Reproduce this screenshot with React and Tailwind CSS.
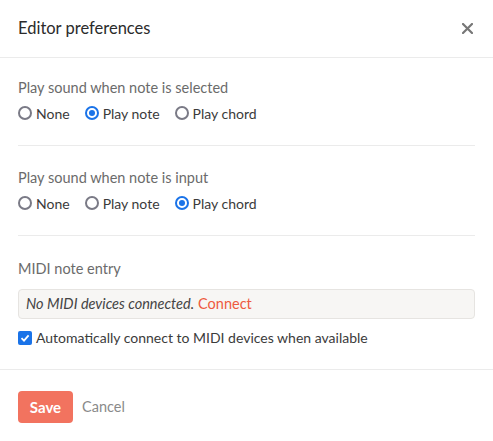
import { useState } from 'react';

const OPTIONS = ['None', 'Play note', 'Play chord'];

function Radio({ checked, label, onClick }) {
  return (
    <button type="button" onClick={onClick} className="flex items-center gap-[4px] text-[14px] text-[#3b3b3b]">
      <span
        className={`flex h-[14px] w-[14px] items-center justify-center rounded-full border-2 ${
          checked ? 'border-[#1a73e8]' : 'border-[#7a7a86]'
        }`}
      >
        {checked && <span className="h-[6px] w-[6px] rounded-full bg-[#1a73e8]" />}
      </span>
      {label}
    </button>
  );
}

function RadioGroup({ title, value, onChange }) {
  return (
    <div className="border-b border-[#ebebeb] pb-[21px]">
      <div className="text-[14.5px] text-[#6b6b6b]">{title}</div>
      <div className="mt-[4px] flex gap-[15px]">
        {OPTIONS.map((opt) => (
          <Radio key={opt} label={opt} checked={value === opt} onClick={() => onChange(opt)} />
        ))}
      </div>
    </div>
  );
}

export default function App() {
  const [onSelect, setOnSelect] = useState('Play note');
  const [onInput, setOnInput] = useState('Play chord');
  const [autoConnect, setAutoConnect] = useState(true);

  return (
    <div className="h-[441px] w-[493px] bg-white font-['Lato',sans-serif] antialiased">
      <div className="flex h-[58px] items-center justify-between border-b border-[#ebebeb] px-[18px]">
        <h2 className="text-[16.5px] text-[#2b2b2b]">Editor preferences</h2>
        <button type="button" className="mr-[2px] text-[#777]">
          <svg width="11" height="11" viewBox="0 0 11 11">
            <path d="M1 1L10 10M10 1L1 10" stroke="currentColor" strokeWidth="2.2" strokeLinecap="round" />
          </svg>
        </button>
      </div>

      <div className="flex flex-col gap-[21px] px-[18px] pt-[19px]">
        <RadioGroup title="Play sound when note is selected" value={onSelect} onChange={setOnSelect} />
        <RadioGroup title="Play sound when note is input" value={onInput} onChange={setOnInput} />

        <div className="mt-[1px] pb-[21px]">
          <div className="text-[14.5px] text-[#6b6b6b]">MIDI note entry</div>
          <div className="mt-[10px] flex h-[30px] items-center rounded-[4px] border border-[#e6e4e1] bg-[#f7f6f4] px-[7px] text-[14.5px]">
            <span className="italic text-[#444]">No MIDI devices connected.</span>
            <a className="ml-[4px] cursor-pointer text-[#ee5a40]">Connect</a>
          </div>
          <label className="mt-[8px] flex items-center gap-[4px] text-[14px] text-[#3b3b3b]">
            <button
              type="button"
              onClick={() => setAutoConnect(!autoConnect)}
              className={`flex h-[14px] w-[14px] items-center justify-center rounded-[2px] ${
                autoConnect ? 'bg-[#1a73e8]' : 'border-2 border-[#7a7a86]'
              }`}
            >
              {autoConnect && (
                <svg width="10" height="10" viewBox="0 0 10 10">
                  <path d="M1.5 5.2L4 7.6L8.6 2.4" fill="none" stroke="white" strokeWidth="1.8" />
                </svg>
              )}
            </button>
            Automatically connect to MIDI devices when available
          </label>
        </div>
      </div>

      <div className="flex items-center gap-[9px] border-t border-[#ebebeb] px-[18px] pt-[21px]">
        <button type="button" className="h-[32px] w-[55px] rounded-[4px] bg-[#f2735f] text-[15px] font-bold text-white">
          Save
        </button>
        <button type="button" className="text-[14.5px] text-[#8a8a8a]">Cancel</button>
      </div>
    </div>
  );
}
